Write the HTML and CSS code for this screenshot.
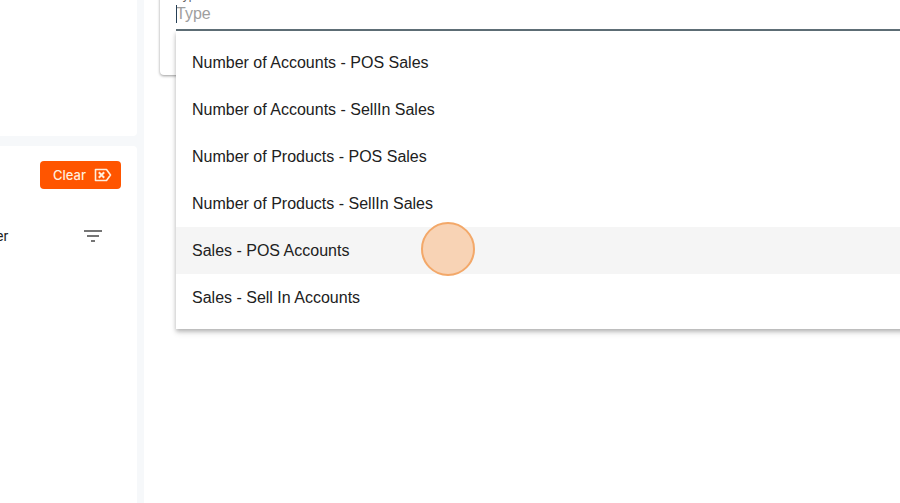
FILE: index.html
```html
<!DOCTYPE html>
<html lang="en">
<head>
<meta charset="utf-8">
<title>Report type</title>
<link rel="stylesheet" href="styles.css">
</head>
<body>
<div class="layout">
  <aside class="sidebar">
    <section class="panel panel-top"></section>
    <section class="panel panel-filters">
      <button class="clear" type="button">
        Clear
        <svg width="18" height="14" viewBox="0 0 18 14" fill="none" stroke="currentColor" stroke-width="1.6" aria-hidden="true">
          <path d="M1.5 1.5H12.5L16.5 7L12.5 12.5H1.5Z" stroke-linejoin="round"/>
          <path d="M4.8 4.3L10.2 9.7M10.2 4.3L4.8 9.7" stroke-width="2"/>
        </svg>
      </button>
      <div class="filter-row">
        <span>er</span>
        <svg width="18" height="12" viewBox="0 0 18 12" fill="#757575" aria-hidden="true">
          <path d="M0 0H18V2H0ZM3 5H15V7H3ZM7 10H11V12H7Z"/>
        </svg>
      </div>
    </section>
  </aside>
  <main class="content">
    <section class="card">
      <div class="field">
        <label for="type">Type</label>
        <input id="type" type="text" placeholder="Type" autocomplete="off">
        <ul class="menu" role="listbox" aria-label="Type">
          <li role="option">Number of Accounts - POS Sales</li>
          <li role="option">Number of Accounts - SellIn Sales</li>
          <li role="option">Number of Products - POS Sales</li>
          <li role="option">Number of Products - SellIn Sales</li>
          <li role="option" class="active">Sales - POS Accounts<span class="pointer"></span></li>
          <li role="option">Sales - Sell In Accounts</li>
        </ul>
      </div>
    </section>
  </main>
</div>
</body>
</html>
```
FILE: styles.css
```css
* {
  box-sizing: border-box;
}

body {
  margin: 0;
  font-family: "Liberation Sans", Arial, sans-serif;
  color: #212121;
  background: #fff;
}

.layout {
  display: flex;
  min-height: 100vh;
  overflow: hidden;
}

.sidebar {
  display: flex;
  flex-direction: column;
  gap: 10px;
  flex: 0 0 144px;
  padding-right: 7px;
  background: #f6f8fa;
}

.panel {
  background: #fff;
}

.panel-top {
  height: 136px;
  border-radius: 0 0 4px 0;
}

.panel-filters {
  flex: 1;
  padding: 15px 16px 0 0;
  border-radius: 0 4px 0 0;
}

.clear {
  display: flex;
  align-items: center;
  justify-content: space-between;
  width: 81px;
  height: 28px;
  margin-left: auto;
  padding: 0 9px 0 13px;
  border: 0;
  border-radius: 4px;
  background: #ff5500;
  color: #ffeedd;
  font: 500 13px Inter, sans-serif;
}

.filter-row {
  display: flex;
  align-items: center;
  justify-content: space-between;
  margin: 37px 0 0 -4px;
  padding-right: 19px;
  font: 14px/20px Roboto, sans-serif;
}

.content {
  flex: 1;
  min-width: 0;
  padding-left: 16px;
}

.card {
  height: 88px;
  margin: -13px -16px 0 0;
  padding-left: 16px;
  border-radius: 0 0 0 4px;
  box-shadow: 0 1px 3px rgba(0, 0, 0, 0.4);
}

.field {
  position: relative;
  display: flex;
  flex-direction: column;
}

.field label {
  height: 16px;
  color: #616161;
  font-size: 12px;
  line-height: 16px;
}

.field input {
  height: 28px;
  padding: 0 0 4px;
  border: 0;
  border-bottom: 2px solid #607078;
  outline: 0;
  background: transparent;
  font: 16px "Liberation Sans", Arial, sans-serif;
}

.field input::placeholder {
  color: #9e9e9e;
}

/* Text caret of the active field */
.field::before {
  content: "";
  position: absolute;
  top: 18px;
  left: 0;
  width: 1px;
  height: 18px;
  background: #263f55;
}

.menu {
  position: absolute;
  top: 100%;
  left: 0;
  right: 0;
  margin: 0;
  padding: 8px 0;
  list-style: none;
  background: #fff;
  box-shadow: 0 2px 4px rgba(0, 0, 0, 0.22), 0 4px 6px rgba(0, 0, 0, 0.12);
}

.menu li {
  position: relative;
  padding: 0 16px;
  font-size: 16px;
  line-height: 47px;
}

.menu .active {
  background: #f5f5f5;
}

/* Click marker over the highlighted option */
.pointer {
  position: absolute;
  top: -5px;
  left: 245px;
  z-index: 1;
  width: 54px;
  height: 54px;
  border: 2px solid #f3a869;
  border-radius: 50%;
  background: #f8d3b5;
}
```
